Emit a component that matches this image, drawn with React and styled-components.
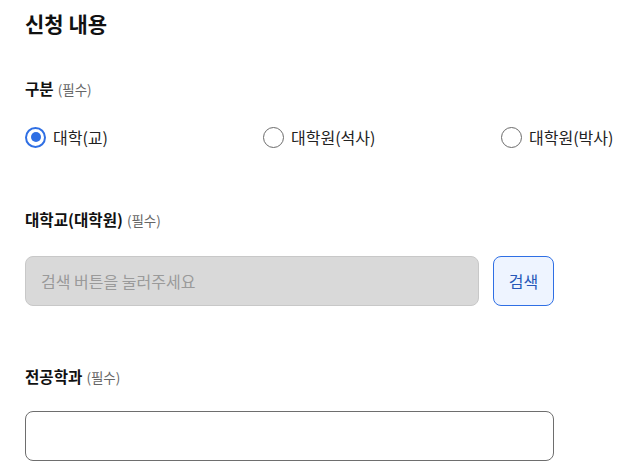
import React, { useState } from 'react';
import styled, { createGlobalStyle } from 'styled-components';

const GlobalStyle = createGlobalStyle`
  body {
    margin: 0;
    background: #fff;
    font-family: "Noto Sans CJK KR", "Noto Sans", sans-serif;
    color: #111;
  }
`;

const Page = styled.div`
  padding: 8px 25px 0;
`;

const Title = styled.h2`
  margin: 0 0 39px;
  font-size: 21px;
  line-height: 30px;
  font-weight: 700;
`;

const Field = styled.div`
  display: flex;
  flex-direction: column;
  gap: ${p => p.$gap || 25}px;
  margin-bottom: ${p => p.$after || 0}px;
`;

const Label = styled.div`
  font-size: 15.6px;
  line-height: 22px;
  font-weight: 700;
  color: #111;
`;

const Required = styled.span`
  font-size: 13.5px;
  font-weight: 400;
  color: #666;
  margin-left: 4px;
`;

const RadioGroup = styled.div`
  display: grid;
  grid-template-columns: 238px 238px auto;
`;

const RadioItem = styled.label`
  display: flex;
  align-items: center;
  gap: 7px;
  height: 22px;
  font-size: 16px;
  color: #222;
  cursor: pointer;
`;

const RadioCircle = styled.span`
  box-sizing: border-box;
  width: 21px;
  height: 21px;
  border-radius: 50%;
  border: ${p => (p.$on ? '2px solid #2f6fe4' : '1px solid #6b6b6b')};
  display: flex;
  align-items: center;
  justify-content: center;
  &::after {
    content: '';
    width: 10px;
    height: 10px;
    border-radius: 50%;
    background: #2f6fe4;
    display: ${p => (p.$on ? 'block' : 'none')};
  }
`;

const Row = styled.div`
  display: flex;
  gap: 14px;
  width: 529px;
`;

const Input = styled.input`
  box-sizing: border-box;
  flex: 1;
  height: 50px;
  padding: 0 15px;
  border-radius: 8px;
  border: 1px solid ${p => (p.disabled ? '#c8c8c8' : '#6e6e6e')};
  background: ${p => (p.disabled ? '#d9d9d9' : '#fff')};
  font-family: inherit;
  font-size: 16px;
  color: #222;
  &::placeholder {
    color: #9a9a9a;
  }
`;

const SearchButton = styled.button`
  box-sizing: border-box;
  width: 61px;
  height: 50px;
  border-radius: 8px;
  border: 1px solid #2f6fe4;
  background: #eef4ff;
  color: #2657b8;
  font-family: inherit;
  font-size: 16px;
  cursor: pointer;
`;

const options = ['대학(교)', '대학원(석사)', '대학원(박사)'];

export default function App() {
  const [kind, setKind] = useState(0);
  return (
    <>
      <GlobalStyle />
      <Page>
        <Title>신청 내용</Title>
        <Field $gap={26} $after={60}>
          <Label>구분<Required>(필수)</Required></Label>
          <RadioGroup>
            {options.map((o, i) => (
              <RadioItem key={o} onClick={() => setKind(i)}>
                <RadioCircle $on={kind === i} />
                {o}
              </RadioItem>
            ))}
          </RadioGroup>
        </Field>
        <Field $after={59}>
          <Label>대학교(대학원)<Required>(필수)</Required></Label>
          <Row>
            <Input disabled placeholder="검색 버튼을 눌러주세요" />
            <SearchButton>검색</SearchButton>
          </Row>
        </Field>
        <Field $gap={23}>
          <Label>전공학과<Required>(필수)</Required></Label>
          <Row>
            <Input />
          </Row>
        </Field>
      </Page>
    </>
  );
}
